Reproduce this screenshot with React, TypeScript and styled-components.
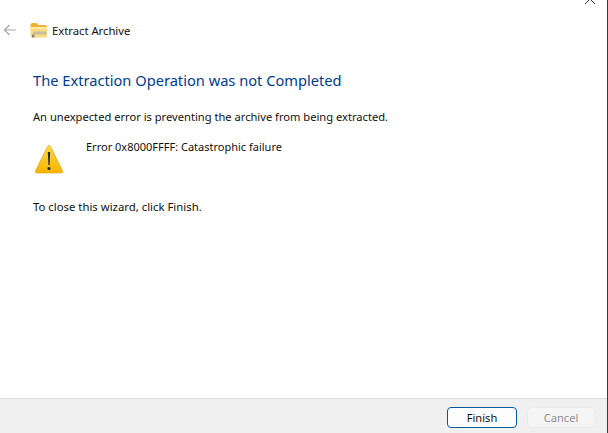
import React from "react";
import styled, { createGlobalStyle } from "styled-components";

const Global = createGlobalStyle`
  html, body { margin: 0; padding: 0; background: #fff; }
  #root { width: 608px; height: 433px; }
`;

const Window = styled.div`
  position: relative;
  width: 608px;
  height: 433px;
  box-sizing: border-box;
  display: flex;
  flex-direction: column;
  overflow: hidden;
  border-right: 1px solid #3a3a3a;
  background: #fff;
  font-family: "Noto Sans", "Open Sans", sans-serif;
  color: #111;
`;

const Caret = styled.svg`
  position: absolute;
  top: -3px;
  right: 11px;
`;

const Header = styled.header`
  height: 70px;
  flex: none;
  box-sizing: border-box;
  padding: 23px 0 0 3px;
  display: flex;
  align-items: flex-start;
`;

const BackIcon = styled.svg`
  flex: none;
`;

const FolderIcon = styled.svg`
  flex: none;
  margin-left: 13px;
  margin-top: -1px;
`;

const HeaderTitle = styled.span`
  margin-left: 4px;
  font-size: 11.25px;
  line-height: 15px;
`;

const Content = styled.main`
  flex: 1;
  padding: 0 0 0 33px;
`;

const Heading = styled.h1`
  margin: 0;
  font-size: 14.65px;
  line-height: 21px;
  font-weight: 400;
  color: #003d8f;
`;

const Paragraph = styled.p`
  margin: 18px 0 0;
  font-size: 11.15px;
  line-height: 16px;
`;

const ErrorRow = styled.div`
  display: flex;
  align-items: flex-start;
  margin-top: 14px;
`;

const WarningIcon = styled.svg`
  flex: none;
  margin-top: 6px;
  margin-left: 2px;
`;

const ErrorText = styled.span`
  margin-left: 23px;
  font-size: 11px;
  line-height: 16px;
`;

const Closing = styled.p`
  margin: 25px 0 0;
  font-size: 11.35px;
  line-height: 16px;
`;

const Footer = styled.footer`
  height: 35px;
  flex: none;
  box-sizing: border-box;
  border-top: 1px solid #dfdfdf;
  background: #f0f0f0;
  display: flex;
  justify-content: flex-end;
  align-items: flex-start;
  gap: 10px;
  padding: 8px 12px 0 0;
`;

const Button = styled.button<{ $primary?: boolean }>`
  width: ${(p) => (p.$primary ? "70px" : "68px")};
  height: 21px;
  box-sizing: border-box;
  padding: 0;
  border-radius: 4px;
  font-family: inherit;
  font-size: 11.15px;
  line-height: 16px;
  background: ${(p) => (p.$primary ? "#fdfdfd" : "#f5f5f5")};
  border: 1px solid ${(p) => (p.$primary ? "#005a9e" : "#ececec")};
  color: ${(p) => (p.$primary ? "#111" : "#8f8f8f")};
`;

export default function App() {
  return (
    <>
      <Global />
      <Window>
        <Caret width="12" height="8" viewBox="0 0 12 8" fill="none">
          <path d="M1 7 L6 2 L11 7" stroke="#333" strokeWidth="1" />
        </Caret>
        <Header>
          <BackIcon width="14" height="14" viewBox="0 0 14 14" fill="none">
            <path d="M13 7 H1.5 M6.5 2 L1.5 7 L6.5 12" stroke="#a6a6a6" strokeWidth="1.2" />
          </BackIcon>
          <FolderIcon width="18" height="17" viewBox="0 0 18 17">
            <path d="M0.5 3 Q0.5 1 2.5 1 H6.5 L8.5 3 H15.5 Q17 3 17 4.5 V7 H0.5 Z" fill="#eeb02f" />
            <rect x="0.5" y="5" width="16.5" height="10.5" rx="1" fill="#fcdc7c" />
            <rect x="0.5" y="5" width="16.5" height="1.4" fill="#fff0b8" />
            <rect x="3" y="9.5" width="13" height="3" fill="#b9ad8a" />
            <path d="M3.5 10 H15.5 M3.5 12 H15.5" stroke="#f3eedd" strokeWidth="1" strokeDasharray="1 1" />
            <rect x="2" y="12.5" width="2.5" height="3" fill="#8a8a80" />
          </FolderIcon>
          <HeaderTitle>Extract Archive</HeaderTitle>
        </Header>
        <Content>
          <Heading>The Extraction Operation was not Completed</Heading>
          <Paragraph>An unexpected error is preventing the archive from being extracted.</Paragraph>
          <ErrorRow>
            <WarningIcon width="28" height="29" viewBox="0 0 28 29">
              <defs>
                <linearGradient id="warn" x1="0" y1="0" x2="0" y2="1">
                  <stop offset="0" stopColor="#ffd84d" />
                  <stop offset="1" stopColor="#f5b400" />
                </linearGradient>
              </defs>
              <path d="M14 0.5 Q15 0.5 15.6 1.6 L27.6 26 Q28.2 28 26.2 28 H1.8 Q-0.2 28 0.4 26 L12.4 1.6 Q13 0.5 14 0.5 Z" fill="url(#warn)" stroke="#e0a000" strokeWidth="0.6" />
              <path d="M12.8 7 H15.2 L14.6 20 H13.4 Z" fill="#2b2b2b" />
              <circle cx="14" cy="23.5" r="1.6" fill="#2b2b2b" />
            </WarningIcon>
            <ErrorText>Error 0x8000FFFF: Catastrophic failure</ErrorText>
          </ErrorRow>
          <Closing>To close this wizard, click Finish.</Closing>
        </Content>
        <Footer>
          <Button $primary>Finish</Button>
          <Button disabled>Cancel</Button>
        </Footer>
      </Window>
    </>
  );
}
